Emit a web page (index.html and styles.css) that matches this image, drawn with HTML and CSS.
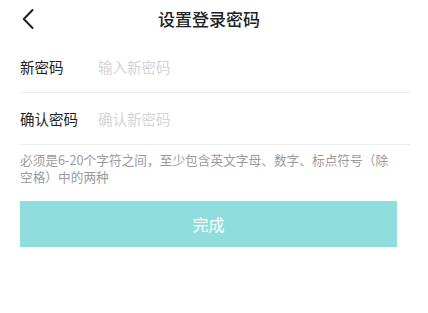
FILE: index.html
```html
<!DOCTYPE html>
<html lang="zh-CN">
<head>
<meta charset="utf-8">
<title>设置登录密码</title>
<link rel="stylesheet" href="styles.css">
</head>
<body>
<header class="nav">
  <button class="back" aria-label="返回">
    <svg width="12" height="20" viewBox="0 0 12 20"><path d="M10.5 1 L1.8 10 L10.5 19" fill="none" stroke="#222" stroke-width="2" stroke-linecap="round" stroke-linejoin="round"/></svg>
  </button>
  <h1 class="title">设置登录密码</h1>
  <span class="spacer"></span>
</header>
<main class="content">
  <div class="field">
    <label class="label">新密码</label>
    <input class="input" type="password" placeholder="输入新密码">
  </div>
  <div class="field">
    <label class="label">确认密码</label>
    <input class="input" type="password" placeholder="确认新密码">
  </div>
  <p class="hint">必须是6-20个字符之间，至少包含英文字母、数字、标点符号（除<br>空格）中的两种</p>
  <button class="submit">完成</button>
</main>
</body>
</html>
```
FILE: styles.css
```css
* { box-sizing: border-box; }
html, body { margin: 0; padding: 0; background: #fff; }
body {
  font-family: "Noto Sans CJK SC", "Noto Sans", sans-serif;
  color: #222;
  width: 428px;
}
.nav {
  height: 41px;
  display: grid;
  grid-template-columns: 1fr auto 1fr;
  align-items: center;
}
.back {
  justify-self: start;
  margin-left: 22px;
  margin-top: -3px;
  padding: 0;
  border: 0;
  background: none;
  width: 12px;
  height: 20px;
  display: flex;
}
.title {
  margin: -3px 10px 0 0;
  font-size: 17px;
  font-weight: 500;
  line-height: 24px;
  color: #222;
}
.content {
  padding: 0 17px 0 20px;
}
.field {
  height: 52px;
  display: flex;
  align-items: center;
  border-bottom: 1px solid #ececec;
}
.label {
  width: 78px;
  flex: none;
  font-size: 14.5px;
  color: #222;
  line-height: 20px;
}
.input {
  flex: 1;
  border: 0;
  outline: none;
  padding: 0;
  font-family: inherit;
  font-size: 14.5px;
  line-height: 20px;
  background: transparent;
}
.input::placeholder { color: #d3d3d6; }
.hint {
  margin: 6px 0 0;
  font-size: 12.7px;
  line-height: 17px;
  color: #9a9a9e;
  white-space: nowrap;
}
.submit {
  display: block;
  margin-top: 16px;
  width: 377px;
  height: 46px;
  border: 0;
  background: #8fdedd;
  color: #fff;
  font-family: inherit;
  font-size: 16px;
  padding: 0;
}
```
